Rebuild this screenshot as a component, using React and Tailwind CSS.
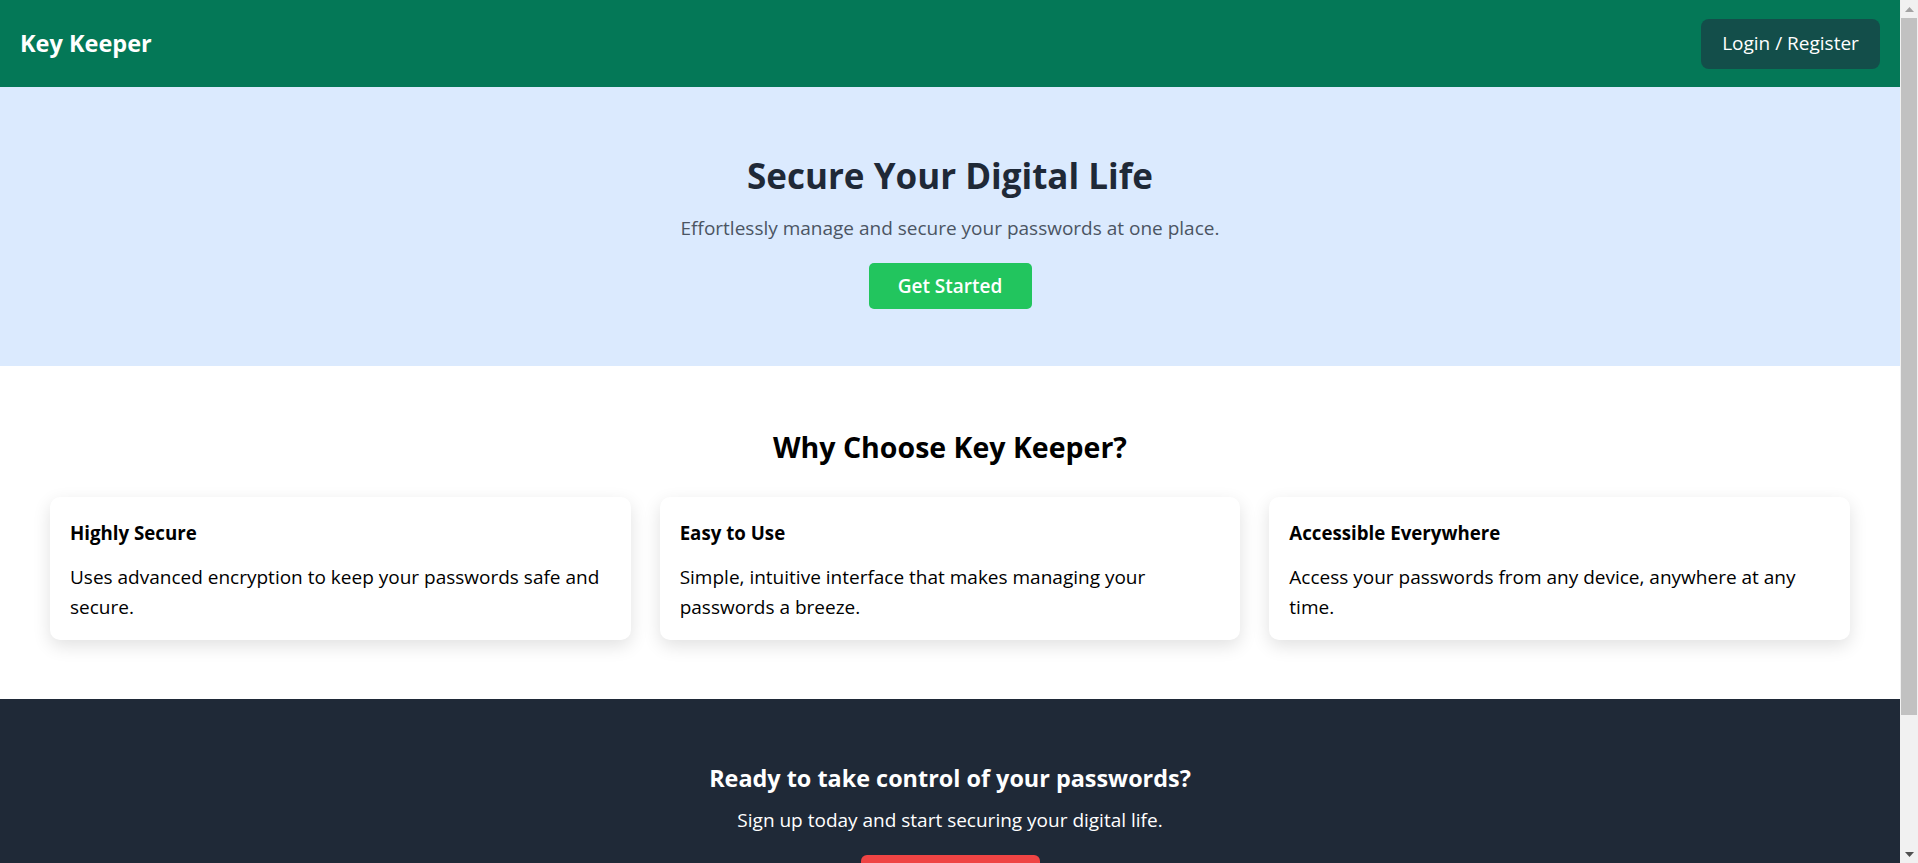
export default function App() {
    const features = [
        { title: 'Highly Secure', text: 'Uses advanced encryption to keep your passwords safe and secure.' },
        { title: 'Easy to Use', text: 'Simple, intuitive interface that makes managing your passwords a breeze.' },
        { title: 'Accessible Everywhere', text: 'Access your passwords from any device, anywhere at any time.' },
    ];

    return (
        <div className="flex items-start bg-white text-black font-['Open_Sans',sans-serif]">
            <main className="flex-1 min-w-0">
                {/* Navbar */}
                <nav className="bg-[#047857] h-[87px] px-[20px] flex items-center justify-between">
                    <span className="text-white text-[23.5px] font-bold">Key Keeper</span>
                    <button className="bg-[#134e4a] text-white text-[19px] h-[50px] w-[179px] rounded-[8px]">
                        Login / Register
                    </button>
                </nav>

                {/* Hero */}
                <section className="bg-[#dbeafe] pt-[64px] pb-[57px] flex flex-col items-center text-center">
                    <h1 className="text-[35px] leading-[50px] font-bold text-[#1f2937]">Secure Your Digital Life</h1>
                    <p className="mt-[12px] text-[19px] leading-[30px] text-[#4b5563]">
                        Effortlessly manage and secure your passwords at one place.
                    </p>
                    <button className="mt-[20px] bg-[#22c55e] text-white text-[19px] font-semibold h-[46px] w-[163px] rounded-[5px]">
                        Get Started
                    </button>
                </section>

                {/* Features */}
                <section className="pt-[61px] pb-[59px] px-[50px]">
                    <h2 className="text-center text-[28.5px] leading-[40px] font-bold">Why Choose Key Keeper?</h2>
                    <div className="mt-[30px] grid grid-cols-3 gap-[29px]">
                        {features.map((f, i) => (
                            <div key={i} className="bg-white rounded-[10px] shadow-[0_6px_18px_rgba(0,0,0,0.12)] pt-[22px] px-[20px] h-[143px]">
                                <h3 className="text-[18.7px] leading-[28px] font-bold">{f.title}</h3>
                                <p className="mt-[15px] text-[19px] leading-[30px]">{f.text}</p>
                            </div>
                        ))}
                    </div>
                </section>

                {/* Call to action */}
                <section className="bg-[#1f2937] pt-[62px] pb-[60px] flex flex-col items-center text-center text-white">
                    <h2 className="text-[23.4px] leading-[35px] font-bold">Ready to take control of your passwords?</h2>
                    <p className="mt-[9px] text-[19px] leading-[30px]">Sign up today and start securing your digital life.</p>
                    <button className="mt-[20px] bg-[#ef4444] text-white text-[19px] font-semibold h-[50px] w-[179px] rounded-[6px]">
                        Sign Up Now
                    </button>
                </section>

                {/* Footer */}
                <footer className="bg-[#111827] text-gray-400 py-[40px] px-[50px] text-center text-[16px] h-[700px]">
                    <p>© 2024 Key Keeper. All rights reserved.</p>
                </footer>
            </main>

            {/* Scrollbar */}
            <aside className="sticky top-0 w-[18px] h-screen shrink-0 bg-[#f1f1f1] flex flex-col">
                <div className="h-[18px] flex items-center justify-center">
                    <svg width="9" height="5" viewBox="0 0 9 5"><path d="M4.5 0 L9 5 L0 5 Z" fill="#a3a3a3" /></svg>
                </div>
                <div className="flex-1 px-[1px]">
                    <div className="h-[697px] bg-[#c1c1c1]" />
                </div>
                <div className="h-[18px] flex items-center justify-center">
                    <svg width="9" height="5" viewBox="0 0 9 5"><path d="M0 0 L9 0 L4.5 5 Z" fill="#505050" /></svg>
                </div>
            </aside>
        </div>
    );
}
